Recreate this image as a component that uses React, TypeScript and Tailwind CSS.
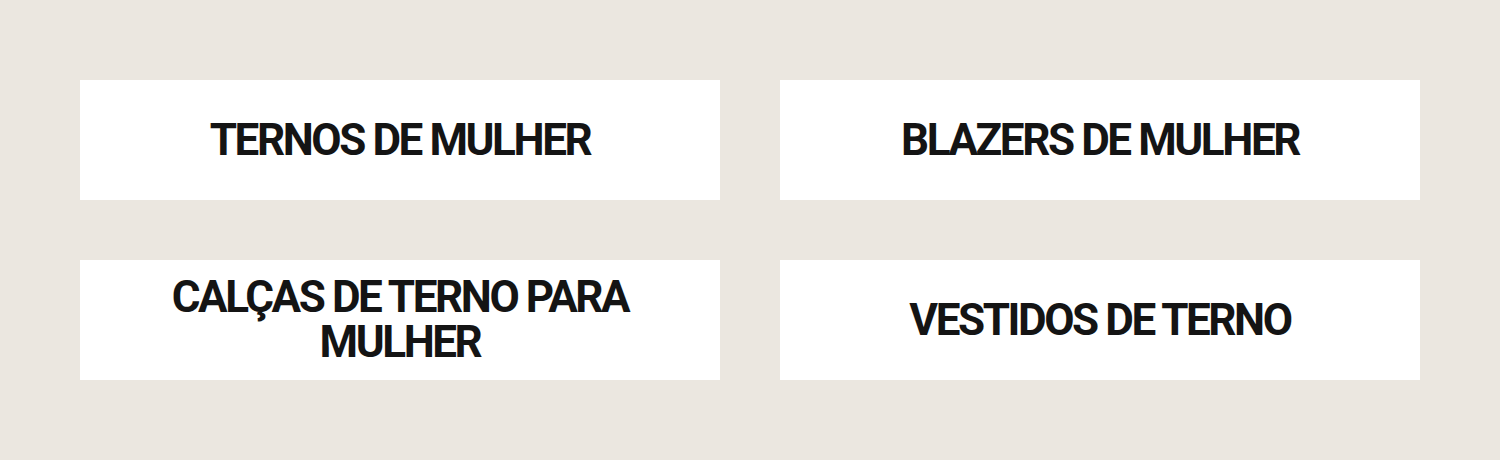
const items = [
  "TERNOS DE MULHER",
  "BLAZERS DE MULHER",
  "CALÇAS DE TERNO PARA MULHER",
  "VESTIDOS DE TERNO",
];

export default function App() {
  return (
    <div className="min-h-[460px] w-full bg-[#ebe7e0] p-20">
      <div className="grid grid-cols-2 gap-[60px]">
        {items.map((label) => (
          <a
            key={label}
            href="#"
            className="flex h-[120px] items-center justify-center bg-white px-20 text-center"
          >
            <span className="font-['Roboto',sans-serif] text-[44px] font-bold leading-[45px] tracking-[-0.055em] text-[#141414]">
              {label}
            </span>
          </a>
        ))}
      </div>
    </div>
  );
}
